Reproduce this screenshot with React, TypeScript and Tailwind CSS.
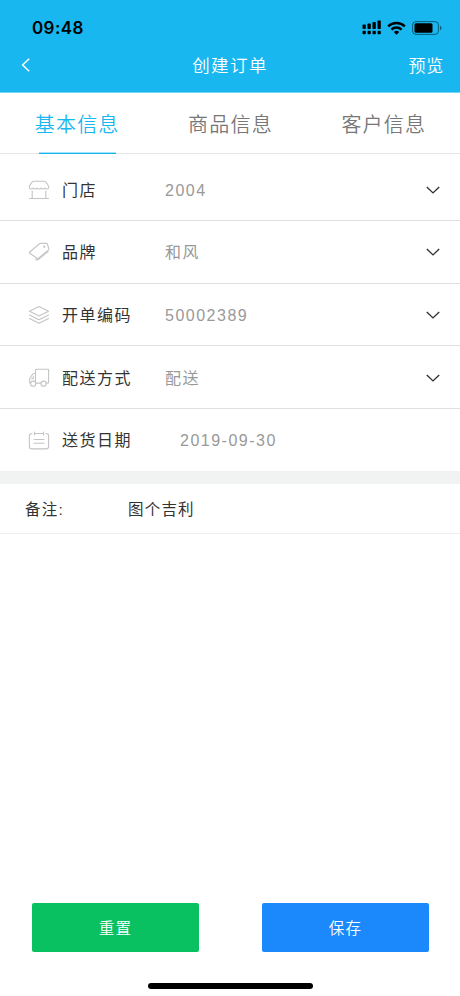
import type { ReactNode } from 'react'

interface Field {
  label: string
  value: string
  icon: ReactNode
  select?: boolean
}

function Icon({ children }: { children: ReactNode }) {
  return (
    <svg
      width="22"
      height="22"
      viewBox="0 0 22 22"
      fill="none"
      stroke="#c4c4c4"
      strokeWidth="1.1"
      strokeLinecap="round"
      strokeLinejoin="round"
      className="mt-px shrink-0"
    >
      {children}
    </svg>
  )
}

const fields: Field[] = [
  {
    label: '门店',
    value: '2004',
    select: true,
    icon: (
      <Icon>
        <path d="M5.500 2.300h11q1 0 1.500.8l2.400 3.600q.6 1.100.2 2.200-.5 1.100-1.900 1.100-1.300 0-1.900-1-.7 1-1.900 1t-1.900-1q-.7 1-2 1t-2-1q-.7 1-1.900 1t-1.900-1q-.6 1-1.900 1-1.400 0-1.900-1.100-.4-1.100.2-2.200L4 3.100q.5-.8 1.500-.8z" />
        <path d="M4.200 12v7.500M17.800 12v7.500M1.500 19.500h19" />
      </Icon>
    ),
  },
  {
    label: '品牌',
    value: '和风',
    select: true,
    icon: (
      <Icon>
        <path d="M1.700 11 11.200 3q.7-.6 1.500-.6h5.600q.9.100 1.200 1l1.300 4.300q.2.800-.5 1.400l-9.800 8.100q-.7.500-1.400 0L1.700 12.300q-.7-.6 0-1.300z" />
        <path d="M7.600 18.200q1.400 1.300 2.600.3l9.800-8" />
        <circle cx="16.200" cy="5.700" r=".6" />
      </Icon>
    ),
  },
  {
    label: '开单编码',
    value: '50002389',
    select: true,
    icon: (
      <Icon>
        <path d="M11 2.500 20.500 7.300 11 12 1.500 7.300z" />
        <path d="M1.500 11 11 15.700 20.500 11M1.500 14.500 11 19.200l9.500-4.700" />
      </Icon>
    ),
  },
  {
    label: '配送方式',
    value: '配送',
    select: true,
    icon: (
      <Icon>
        <path d="M7.500 14.500V3q0-.8.800-.8h11.500q.8 0 .8.800v12.300q0 .8-.8.800H7.500M7.500 6.500H5.700q-.7 0-1 .6L2 11q-.4.600-.4 1.200v3.200q0 .7.700.7h1" />
        <path d="M5.300 9.300v2.500H3.500" />
        <circle cx="5.200" cy="16.700" r="2.600" fill="#fff" />
        <circle cx="15.600" cy="16.700" r="2.600" fill="#fff" />
      </Icon>
    ),
  },
  {
    label: '送货日期',
    value: '2019-09-30',
    icon: (
      <Icon>
        <path d="M4 3.500q-2.600 0-2.600 2.300v10.800q0 2.300 2.300 2.300h14.600q2.300 0 2.300-2.300V5.800q0-2.300-2.600-2.300M6.500 3.500h9M6.500 2v3M15.500 2v3M6 9.500h10M6 13.200h10" />
      </Icon>
    ),
  },
]

function StatusBar() {
  return (
    <div className="flex h-[40px] items-center justify-between pt-[16px] pr-[18px] pl-[32px] text-black">
      <span className="font-[Inter] text-[17px] leading-6 font-semibold tracking-[0.400px]">09:48</span>
      <div className="flex items-center">
        <svg width="20" height="15" viewBox="0 0 20 15" fill="#000" className="-mt-[2px]">
          <rect x="0.500" y="4.500" width="3.300" height="4.500" rx="0.800" />
          <rect x="5.500" y="3.500" width="3.300" height="5.500" rx="0.800" />
          <rect x="10.500" y="2" width="3.300" height="7" rx="0.800" />
          <rect x="15.500" y="0.500" width="3.300" height="8.500" rx="0.800" />
          <rect x="0.500" y="10.700" width="3.300" height="3.500" rx="1" />
          <rect x="5.500" y="10.700" width="3.300" height="3.500" rx="1" />
          <rect x="10.500" y="10.700" width="3.300" height="3.500" rx="1" />
          <rect x="15.500" y="10.700" width="3.300" height="3.500" rx="1" />
        </svg>
        <svg width="19" height="14" viewBox="0 0 19 14" className="ml-[5px]" fill="none" stroke="#000" strokeWidth="2.400">
          <path d="M1.200 5.400a11.800 11.800 0 0 1 16.600 0" />
          <path d="M4.400 8.600a7.300 7.300 0 0 1 10.200 0" />
          <path d="M6.800 11a3.900 3.900 0 0 1 5.400 0L9.500 13.800z" fill="#000" stroke="none" />
        </svg>
        <svg width="30" height="14" viewBox="0 0 30 14" className="ml-[6px]">
          <rect x="0.600" y="0.600" width="25.800" height="12.800" rx="3.400" fill="none" stroke="#000" strokeOpacity="0.500" />
          <rect x="2.500" y="2.300" width="18" height="9.400" rx="1.500" fill="#000" />
          <path d="M28 4.800v4.400q1.500-.6 1.500-2.200T28 4.800z" fill="#000" fillOpacity="0.500" />
        </svg>
      </div>
    </div>
  )
}

function FieldRow({ label, value, icon, select }: Field) {
  return (
    <div className="flex h-[62.6px] items-center border-b border-[#dfe0e1] pr-[20px] pl-[28px] text-[16px] tracking-[1.5px] last:border-b-0">
      {icon}
      <span className={select ? 'ml-[12px] w-[103px] shrink-0 pt-[3px] text-[#333]' : 'ml-[12px] w-[103px] shrink-0 pt-px text-[#333]'}>
        {label}
      </span>
      <span className={select ? 'flex-1 pt-[3px] text-[#999]' : 'flex-1 pt-px pl-[15px] text-[#999]'}>{value}</span>
      {select && (
        <svg width="14" height="8" viewBox="0 0 14 8" fill="none" stroke="#333" strokeWidth="1.400" className="mt-px">
          <path d="M0.800 0.900 7 6.900l6.200-6" />
        </svg>
      )}
    </div>
  )
}

export default function App() {
  return (
    <div className="flex h-[996px] w-[460px] flex-col overflow-hidden bg-white font-['Liberation_Sans','Noto_Sans_CJK_SC',sans-serif]">
      <header className="h-[93px] shrink-0 border-b border-[#74d3f4] bg-[#19b7ef]">
        <StatusBar />
        <div className="grid h-[52px] grid-cols-[1fr_auto_1fr] items-center pr-[16px] pl-[21px] text-white">
          <svg width="9" height="14" viewBox="0 0 9 14" fill="none" stroke="#fff" strokeWidth="1.500" className="-mt-[2px]">
            <path d="M8.200 0.700 1.600 7l6.600 6.300" />
          </svg>
          <h1 className="-ml-[5px] pt-px text-[17.500px] font-[350] tracking-[1.400px]">创建订单</h1>
          <span className="justify-self-end pt-[2px] text-[17px] font-[350] tracking-[0.800px]">预览</span>
        </div>
      </header>

      <nav className="grid h-[61px] shrink-0 grid-cols-3 border-b border-[#e4e6e7] text-[20px] font-[350] tracking-[1.200px] text-[#777]">
        <span className="relative flex items-center justify-center pt-[3px] pl-px text-[#19b7ef]">
          基本信息
          <i className="absolute -bottom-px left-[39px] h-[2px] w-[77px] border-t border-[#a3e2f9] bg-[#19b7ef]" />
        </span>
        <span className="flex items-center justify-center pt-[3px] pl-px">商品信息</span>
        <span className="flex items-center justify-center pt-[3px] pl-px">客户信息</span>
      </nav>

      <section className="shrink-0 pt-[4.500px]">
        {fields.map((field) => (
          <FieldRow key={field.label} {...field} />
        ))}
      </section>

      <div className="h-[13px] shrink-0 bg-[#f1f2f2]" />

      <div className="flex h-[50px] shrink-0 items-center border-b border-[#eee] pt-px pl-[25px] text-[15.500px] tracking-[1.200px] text-[#333]">
        <span className="w-[103px]">备注:</span>
        <span>图个吉利</span>
      </div>

      <div className="mt-auto flex shrink-0 justify-between pr-[31px] pl-[32px] text-[15.500px] font-[350] tracking-[1.200px] text-white">
        <button className="h-[49px] w-[167px] rounded-[2px] bg-[#09c160] pt-[2px]">重置</button>
        <button className="h-[49px] w-[167px] rounded-[2px] bg-[#1b88fb] pt-[2px]">保存</button>
      </div>
      <div className="mt-[31px] mb-[7px] ml-[148px] h-[6px] w-[165px] shrink-0 rounded-full bg-black" />
    </div>
  )
}
